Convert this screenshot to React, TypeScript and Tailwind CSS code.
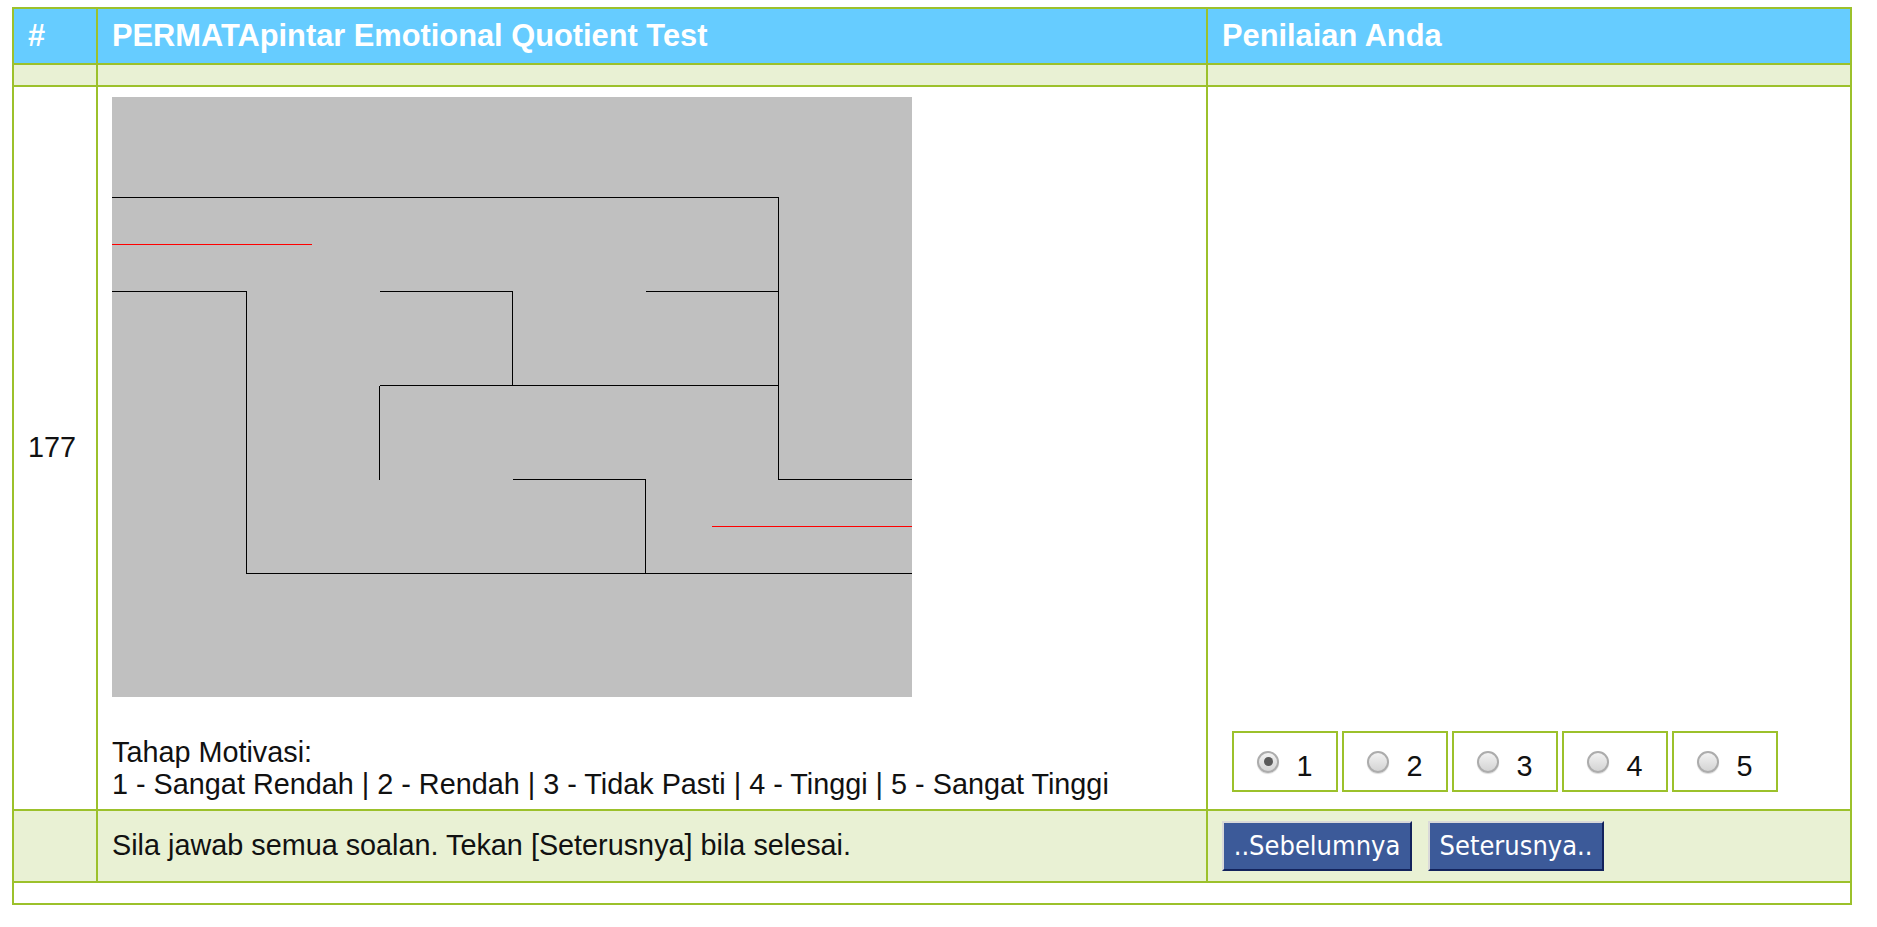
const MAZE_WALLS = [
  // horizontal
  [0, 100.5, 666.5, 100.5],
  [0, 194.5, 134.5, 194.5],
  [267.5, 194.5, 400.5, 194.5],
  [533.5, 194.5, 666.5, 194.5],
  [267.5, 288.5, 666.5, 288.5],
  [400.5, 382.5, 533.5, 382.5],
  [666.5, 382.5, 800, 382.5],
  [134.5, 476.5, 800, 476.5],
  // vertical
  [666.5, 100.5, 666.5, 382.5],
  [134.5, 194.5, 134.5, 476.5],
  [400.5, 194.5, 400.5, 288.5],
  [267.5, 288.5, 267.5, 382.5],
  [533.5, 382.5, 533.5, 476.5],
];

const MAZE_MARKS = [
  [0, 147.5, 200, 147.5],
  [600, 429.5, 800, 429.5],
];

function Maze() {
  return (
    <svg width={800} height={600} className="block" shapeRendering="crispEdges">
      <rect width={800} height={600} fill="#c0c0c0" />
      {MAZE_WALLS.map(([x1, y1, x2, y2], i) => (
        <line key={i} x1={x1} y1={y1} x2={x2} y2={y2} stroke="#000" strokeWidth={1} />
      ))}
      {MAZE_MARKS.map(([x1, y1, x2, y2], i) => (
        <line key={"m" + i} x1={x1} y1={y1} x2={x2} y2={y2} stroke="#ff0000" strokeWidth={1} />
      ))}
    </svg>
  );
}

function Radio({ checked }: { checked?: boolean }) {
  return (
    <span className="flex h-[22px] w-[22px] items-center justify-center rounded-full border-2 border-[#acacac] bg-linear-to-b from-[#f2f2f2] to-[#d4d4d4] shadow-[0_1px_1px_rgba(0,0,0,0.15)]">
      {checked && <span className="h-[9px] w-[9px] rounded-full bg-[#5a5a5a]" />}
    </span>
  );
}

export default function App() {
  const scores = [1, 2, 3, 4, 5];

  return (
    <div className="min-h-screen bg-white pt-[7px] pl-[12px] font-['Liberation_Sans',Arial,sans-serif] text-[28.8px] text-[#111]">
      <div className="grid w-[1840px] grid-cols-[82px_1108px_642px] gap-[2px] bg-[#9cc12b] p-[2px]">
        {/* header */}
        <div className="flex h-[54px] items-center bg-[#66ccff] pl-[14px] text-[30.8px] font-bold text-white">#</div>
        <div className="flex h-[54px] items-center bg-[#66ccff] pl-[14px] text-[30.8px] font-bold text-white">
          PERMATApintar Emotional Quotient Test
        </div>
        <div className="flex h-[54px] items-center bg-[#66ccff] pl-[14px] text-[30.8px] font-bold text-white">
          Penilaian Anda
        </div>

        {/* spacer */}
        <div className="h-[20px] bg-[#e9f1d4]" />
        <div className="h-[20px] bg-[#e9f1d4]" />
        <div className="h-[20px] bg-[#e9f1d4]" />

        {/* question */}
        <div className="flex items-center bg-white pl-[14px]">177</div>
        <div className="bg-white pt-[10px] pb-[9px] pl-[14px]">
          <Maze />
          <div className="mt-[39px] leading-[32px]">
            <div>Tahap Motivasi:</div>
            <div>1 - Sangat Rendah | 2 - Rendah | 3 - Tidak Pasti | 4 - Tinggi | 5 - Sangat Tinggi</div>
          </div>
        </div>
        <div className="flex flex-col justify-end bg-white pl-[24px] pb-[17px]">
          <div className="flex gap-[4px]">
            {scores.map((n) => (
              <label
                key={n}
                className="flex h-[61px] w-[106px] items-center justify-center gap-[17px] border-2 border-[#9cc12b] bg-white"
              >
                <Radio checked={n === 1} />
                <span className="pt-[8px] leading-[32px]">{n}</span>
              </label>
            ))}
          </div>
        </div>

        {/* footer */}
        <div className="h-[70px] bg-[#e9f1d4]" />
        <div className="flex h-[70px] items-center bg-[#e9f1d4] pl-[14px]">
          Sila jawab semua soalan. Tekan [Seterusnya] bila selesai.
        </div>
        <div className="flex h-[70px] items-center gap-[16px] bg-[#e9f1d4] pl-[14px]">
          <button className="flex h-[50px] w-[190px] items-center justify-center border-2 border-t-[#d9d9d9] border-l-[#d9d9d9] border-r-[#13235c] border-b-[#13235c] bg-[#3c5a99] font-['DejaVu_Sans_Condensed','DejaVu_Sans',sans-serif] text-[27px] text-white">
            ..Sebelumnya
          </button>
          <button className="flex h-[50px] w-[176px] items-center justify-center border-2 border-t-[#d9d9d9] border-l-[#d9d9d9] border-r-[#13235c] border-b-[#13235c] bg-[#3c5a99] font-['DejaVu_Sans_Condensed','DejaVu_Sans',sans-serif] text-[27px] text-white">
            Seterusnya..
          </button>
        </div>

        {/* bottom */}
        <div className="col-span-3 h-[20px] bg-white" />
      </div>
    </div>
  );
}
